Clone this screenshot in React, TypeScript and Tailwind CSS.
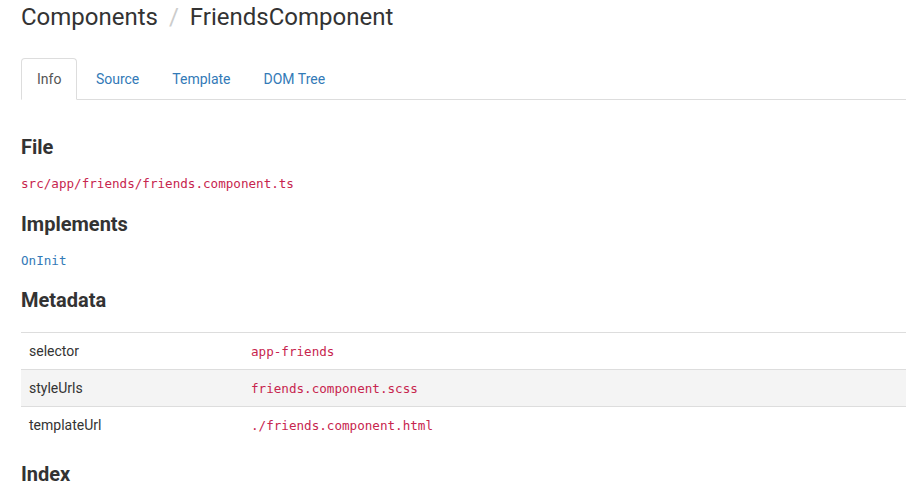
export default function App() {
  const meta = [
    { key: "selector", value: "app-friends" },
    { key: "styleUrls", value: "friends.component.scss" },
    { key: "templateUrl", value: "./friends.component.html" },
  ];
  const tabs = ["Source", "Template", "DOM Tree"];

  return (
    <div
      className="bg-white text-[#333] h-[485px] overflow-hidden pl-[21px] pr-[13px]"
      style={{ fontFamily: "Roboto, 'Liberation Sans', sans-serif" }}
    >
      <h1 className="text-[24px] leading-[34px] pt-0 text-[#333]">
        Components <span className="text-[#ccc] px-[5px]">/</span> FriendsComponent
      </h1>

      <div className="mt-[24px] flex border-b border-[#ddd] text-[14px]">
        <div className="h-[42px] px-[15px] pt-[1px] flex items-center border border-[#ddd] border-b-white -mb-px rounded-t-[4px] bg-white text-[#555]">
          Info
        </div>
        <div className="w-[2px]" />
        {tabs.map((t) => (
          <div key={t} className="h-[41px] px-[16.5px] pt-[2px] flex items-center text-[#337ab7]">
            {t}
          </div>
        ))}
      </div>

      <h3 className="mt-[34px] text-[20px] font-bold leading-[26px]">File</h3>
      <code
        className="block mt-[15px] text-[12.6px] leading-[18px] text-[#c7254e]"
        style={{ fontFamily: "'DejaVu Sans Mono', 'Liberation Mono', monospace" }}
      >
        src/app/friends/friends.component.ts
      </code>

      <h3 className="mt-[18px] text-[20px] font-bold leading-[26px]">Implements</h3>
      <code
        className="block mt-[15px] text-[12.6px] leading-[18px] text-[#337ab7]"
        style={{ fontFamily: "'DejaVu Sans Mono', 'Liberation Mono', monospace" }}
      >
        OnInit
      </code>

      <h3 className="mt-[17px] text-[20px] font-bold leading-[26px]">Metadata</h3>

      <table className="mt-[19px] w-[885px] text-[14px] border-collapse">
        <tbody>
          {meta.map((m, i) => (
            <tr
              key={m.key}
              className={`border-t border-[#ddd] ${i === 1 ? "bg-[#f4f4f4]" : ""} ${i === 1 ? "border-b" : ""}`}
            >
              <td className="h-[37px] pl-[8px] w-[230px] align-middle">{m.key}</td>
              <td className="align-middle">
                <code
                  className="text-[12.6px] text-[#c7254e]"
                  style={{ fontFamily: "'DejaVu Sans Mono', 'Liberation Mono', monospace" }}
                >
                  {m.value}
                </code>
              </td>
            </tr>
          ))}
        </tbody>
      </table>

      <h3 className="mt-[17px] text-[20px] font-bold leading-[26px]">Index</h3>
    </div>
  );
}
